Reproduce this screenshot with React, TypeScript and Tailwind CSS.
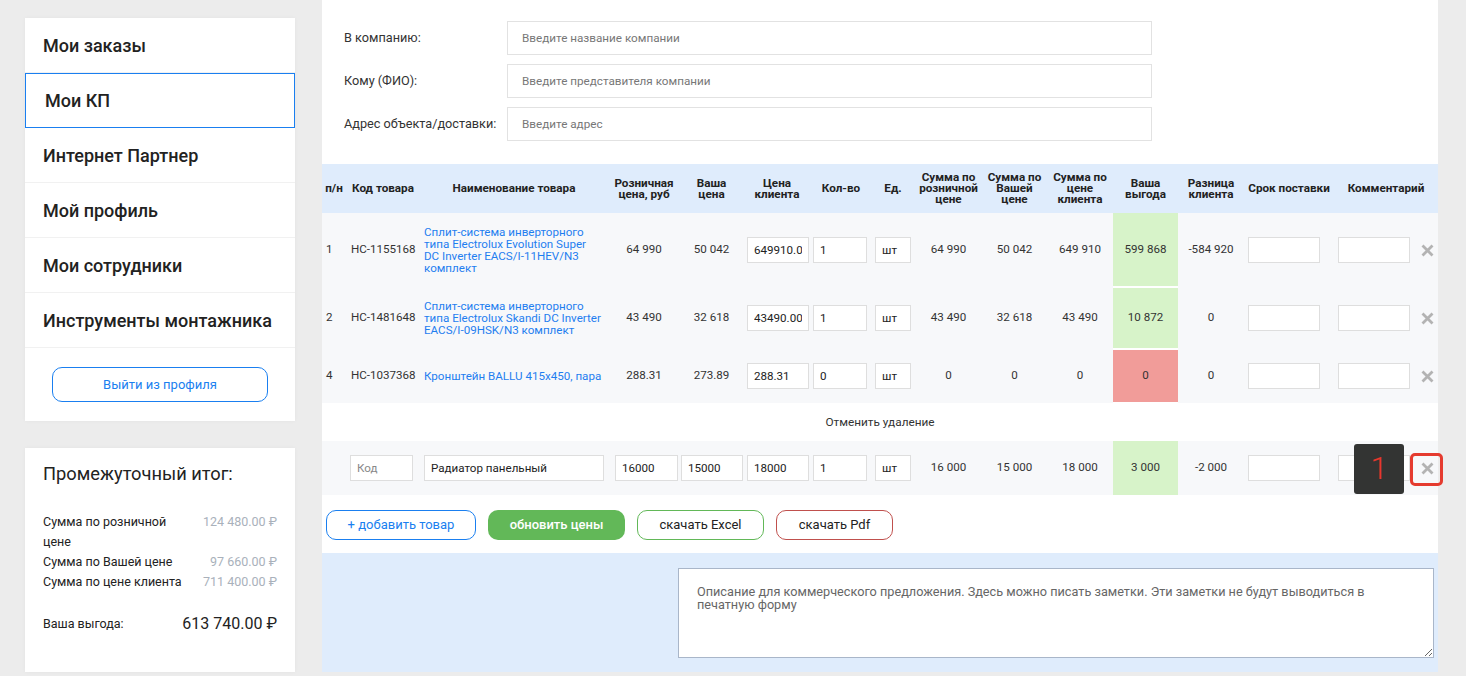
const menu = [
  { label: "Мои заказы" },
  { label: "Мои КП", active: true },
  { label: "Интернет Партнер" },
  { label: "Мой профиль" },
  { label: "Мои сотрудники" },
  { label: "Инструменты монтажника" },
];

const rows = [
  {
    n: "1",
    code: "HC-1155168",
    name: "Сплит-система инверторного типа Electrolux Evolution Super DC Inverter EACS/I-11HEV/N3 комплект",
    retail: "64 990",
    yours: "50 042",
    client: "649910.00",
    qty: "1",
    sumRetail: "64 990",
    sumYours: "50 042",
    sumClient: "649 910",
    profit: "599 868",
    good: true,
    diff: "-584 920",
    h: "h-[74px]",
  },
  {
    n: "2",
    code: "HC-1481648",
    name: "Сплит-система инверторного типа Electrolux Skandi DC Inverter EACS/I-09HSK/N3 комплект",
    retail: "43 490",
    yours: "32 618",
    client: "43490.00",
    qty: "1",
    sumRetail: "43 490",
    sumYours: "32 618",
    sumClient: "43 490",
    profit: "10 872",
    good: true,
    diff: "0",
    h: "h-[62px]",
  },
  {
    n: "4",
    code: "HC-1037368",
    name: "Кронштейн BALLU 415x450, пара",
    retail: "288.31",
    yours: "273.89",
    client: "288.31",
    qty: "0",
    sumRetail: "0",
    sumYours: "0",
    sumClient: "0",
    profit: "0",
    good: false,
    diff: "0",
    h: "h-[54px]",
  },
];

const inputCls =
  "block h-[26px] border border-[#dedede] bg-white px-[6px] text-[11.6px] text-[#222] outline-none placeholder:text-[#888]";

function Cell({ v }: { v: string }) {
  return <td className="text-center align-middle text-[11.6px] text-[#333]">{v}</td>;
}

function RemoveIcon() {
  return (
    <svg width="13" height="13" viewBox="0 0 13 13" className="mx-auto block">
      <path d="M1.5 1.5 L11.5 11.5 M11.5 1.5 L1.5 11.5" stroke="#b3b3b3" strokeWidth="2.8" />
    </svg>
  );
}

export default function App() {
  return (
    <div className="flex min-h-[676px] bg-[#ececec] pl-[25px] font-['Roboto',sans-serif] text-[#222]">
      {/* sidebar */}
      <div className="w-[270px] shrink-0 pt-[18px]">
        <div className="bg-white shadow-[0_0_4px_rgba(0,0,0,0.04)]">
          {menu.map((m) => (
            <div
              key={m.label}
              className={`flex h-[55px] items-center text-[18px] font-medium ${
                m.active ? "border border-[#1a7ff0] pl-[19px]" : "border-b border-[#f1f1f1] pl-[18px]"
              }`}
            >
              {m.label}
            </div>
          ))}
          <div className="flex justify-center py-[19px]">
            <button className="h-[35px] w-[216px] rounded-[10px] border border-[#1a7ff0] text-[13px] text-[#1a7ff0]">
              Выйти из профиля
            </button>
          </div>
        </div>

        <div className="mt-[27px] h-[224px] bg-white px-[18px] pt-[14px] shadow-[0_0_4px_rgba(0,0,0,0.04)]">
          <h3 className="text-[18.3px] leading-[24px] text-[#222]">Промежуточный итог:</h3>
          <div className="mt-[26px] grid grid-cols-[148px_1fr] text-[12.5px] leading-[20px]">
            <span>Сумма по розничной цене</span>
            <span className="text-right text-[#a9b1bb]">124 480.00 ₽</span>
            <span>Сумма по Вашей цене</span>
            <span className="text-right text-[#a9b1bb]">97 660.00 ₽</span>
            <span>Сумма по цене клиента</span>
            <span className="text-right text-[#a9b1bb]">711 400.00 ₽</span>
          </div>
          <div className="mt-[20px] flex items-center justify-between leading-[24px]">
            <span className="text-[12.5px]">Ваша выгода:</span>
            <span className="text-[16px] text-[#222]">613 740.00 ₽</span>
          </div>
        </div>
      </div>

      {/* main */}
      <div className="ml-[27px] flex h-[672px] w-[1116px] shrink-0 flex-col bg-white">
        <div className="flex flex-col gap-[9px] pl-[22px] pt-[21px]">
          {[
            ["В компанию:", "Введите название компании"],
            ["Кому (ФИО):", "Введите представителя компании"],
            ["Адрес объекта/доставки:", "Введите адрес"],
          ].map(([l, p]) => (
            <div key={l} className="flex items-center">
              <label className="w-[163px] text-[12.7px] text-[#333]">{l}</label>
              <input
                placeholder={p}
                className="h-[34px] w-[645px] border border-[#e2e2e2] px-[14px] text-[11.7px] outline-none placeholder:text-[#777]"
              />
            </div>
          ))}
        </div>

        <table className="mt-[23px] w-full table-fixed border-collapse">
          <colgroup>
            {[24, 74, 188, 72, 63, 68, 60, 44, 67, 65, 66, 65, 66, 90, 82, 22].map((w, i) => (
              <col key={i} style={{ width: w }} />
            ))}
          </colgroup>
          <thead>
            <tr className="h-[49px] bg-[#dfecfc] text-[11.7px] font-bold leading-[11px] text-[#222]">
              <th className="text-center font-bold">п/н</th>
              <th className="font-bold">Код товара</th>
              <th className="font-bold">Наименование товара</th>
              <th className="font-bold">
                Розничная
                <br />
                цена, руб
              </th>
              <th className="font-bold">
                Ваша
                <br />
                цена
              </th>
              <th className="font-bold">
                Цена
                <br />
                клиента
              </th>
              <th className="font-bold">Кол-во</th>
              <th className="font-bold">Ед.</th>
              <th className="font-bold">
                Сумма по
                <br />
                розничной
                <br />
                цене
              </th>
              <th className="font-bold">
                Сумма по
                <br />
                Вашей
                <br />
                цене
              </th>
              <th className="font-bold">
                Сумма по
                <br />
                цене
                <br />
                клиента
              </th>
              <th className="font-bold">
                Ваша
                <br />
                выгода
              </th>
              <th className="font-bold">
                Разница
                <br />
                клиента
              </th>
              <th className="font-bold">Срок поставки</th>
              <th className="font-bold" colSpan={2}>
                Комментарий
              </th>
            </tr>
          </thead>
          <tbody>
            {rows.map((r) => (
              <tr key={r.code} className={`${r.h} bg-[#f7f8fa]`}>
                <td className="pl-[4px] text-[11.6px] text-[#333]">{r.n}</td>
                <td className="pl-[5px] text-[11.6px] text-[#333]">{r.code}</td>
                <td className="pl-[4px] pr-[6px] text-[11.6px] leading-[12px] text-[#1f7ef0]">{r.name}</td>
                <Cell v={r.retail} />
                <Cell v={r.yours} />
                <td>
                  <input defaultValue={r.client} className={`${inputCls} ml-[4px] w-[62px]`} />
                </td>
                <td>
                  <input defaultValue={r.qty} className={`${inputCls} ml-[2px] w-[54px]`} />
                </td>
                <td>
                  <input defaultValue="шт" className={`${inputCls} ml-[4px] w-[36px]`} />
                </td>
                <Cell v={r.sumRetail} />
                <Cell v={r.sumYours} />
                <Cell v={r.sumClient} />
                <td
                  className={`border-b-2 border-white text-center text-[11.6px] text-[#333] ${
                    r.good ? "bg-[#d7f3c9]" : "bg-[#f19c99]"
                  }`}
                >
                  {r.profit}
                </td>
                <Cell v={r.diff} />
                <td>
                  <input className={`${inputCls} ml-[4px] w-[72px]`} />
                </td>
                <td>
                  <input className={`${inputCls} ml-[4px] w-[72px]`} />
                </td>
                <td className="text-center">
                  <RemoveIcon />
                </td>
              </tr>
            ))}
            <tr className="h-[38px] bg-white">
              <td colSpan={16} className="text-center text-[11.8px] text-[#333]">
                Отменить удаление
              </td>
            </tr>
            <tr className="h-[54px] bg-[#f7f8fa]">
              <td />
              <td>
                <input placeholder="Код" className={`${inputCls} ml-[4px] w-[63px]`} />
              </td>
              <td>
                <input defaultValue="Радиатор панельный" className={`${inputCls} ml-[4px] w-[180px]`} />
              </td>
              <td>
                <input defaultValue="16000" className={`${inputCls} ml-[7px] w-[63px]`} />
              </td>
              <td>
                <input defaultValue="15000" className={`${inputCls} ml-[1px] w-[62px]`} />
              </td>
              <td>
                <input defaultValue="18000" className={`${inputCls} ml-[4px] w-[62px]`} />
              </td>
              <td>
                <input defaultValue="1" className={`${inputCls} ml-[2px] w-[54px]`} />
              </td>
              <td>
                <input defaultValue="шт" className={`${inputCls} ml-[4px] w-[36px]`} />
              </td>
              <Cell v="16 000" />
              <Cell v="15 000" />
              <Cell v="18 000" />
              <td className="bg-[#d7f3c9] text-center text-[11.6px] text-[#333]">3 000</td>
              <Cell v="-2 000" />
              <td>
                <input className={`${inputCls} ml-[4px] w-[72px]`} />
              </td>
              <td>
                <input className={`${inputCls} ml-[4px] w-[72px]`} />
              </td>
              <td className="relative text-center">
                <RemoveIcon />
                <div className="absolute left-[-62px] top-[3px] flex h-[50px] w-[50px] items-center justify-center rounded-[3px] bg-[#333433] text-[31px] font-light text-[#e8372c]">
                  1
                </div>
                <div className="absolute left-[-6px] top-[12px] h-[33px] w-[33px] rounded-[5px] border-[3px] border-[#e53b2f]" />
              </td>
            </tr>
          </tbody>
        </table>

        <div className="flex gap-[12px] px-[4px] pt-[15px]">
          <button className="h-[30px] w-[150px] rounded-[10px] border border-[#1a7ff0] text-[13px] text-[#1a7ff0]">
            + добавить товар
          </button>
          <button className="h-[30px] w-[137px] rounded-[10px] bg-[#62b858] text-[13px] font-medium text-white">
            обновить цены
          </button>
          <button className="h-[30px] w-[127px] rounded-[10px] border border-[#62b858] text-[13px] text-[#222]">
            скачать Excel
          </button>
          <button className="h-[30px] w-[117px] rounded-[10px] border border-[#c0504d] text-[13px] text-[#222]">
            скачать Pdf
          </button>
        </div>

        <div className="mt-[13px] flex flex-1 justify-end bg-[#dfecfc] pr-[4px] pt-[15px]">
          <textarea
            placeholder="Описание для коммерческого предложения. Здесь можно писать заметки. Эти заметки не будут выводиться в печатную форму"
            className="h-[90px] w-[756px] border border-[#a9b6c9] bg-white px-[18px] pt-[16px] text-[12.7px] leading-[13px] outline-none placeholder:text-[#666]"
          />
        </div>
      </div>
    </div>
  );
}
